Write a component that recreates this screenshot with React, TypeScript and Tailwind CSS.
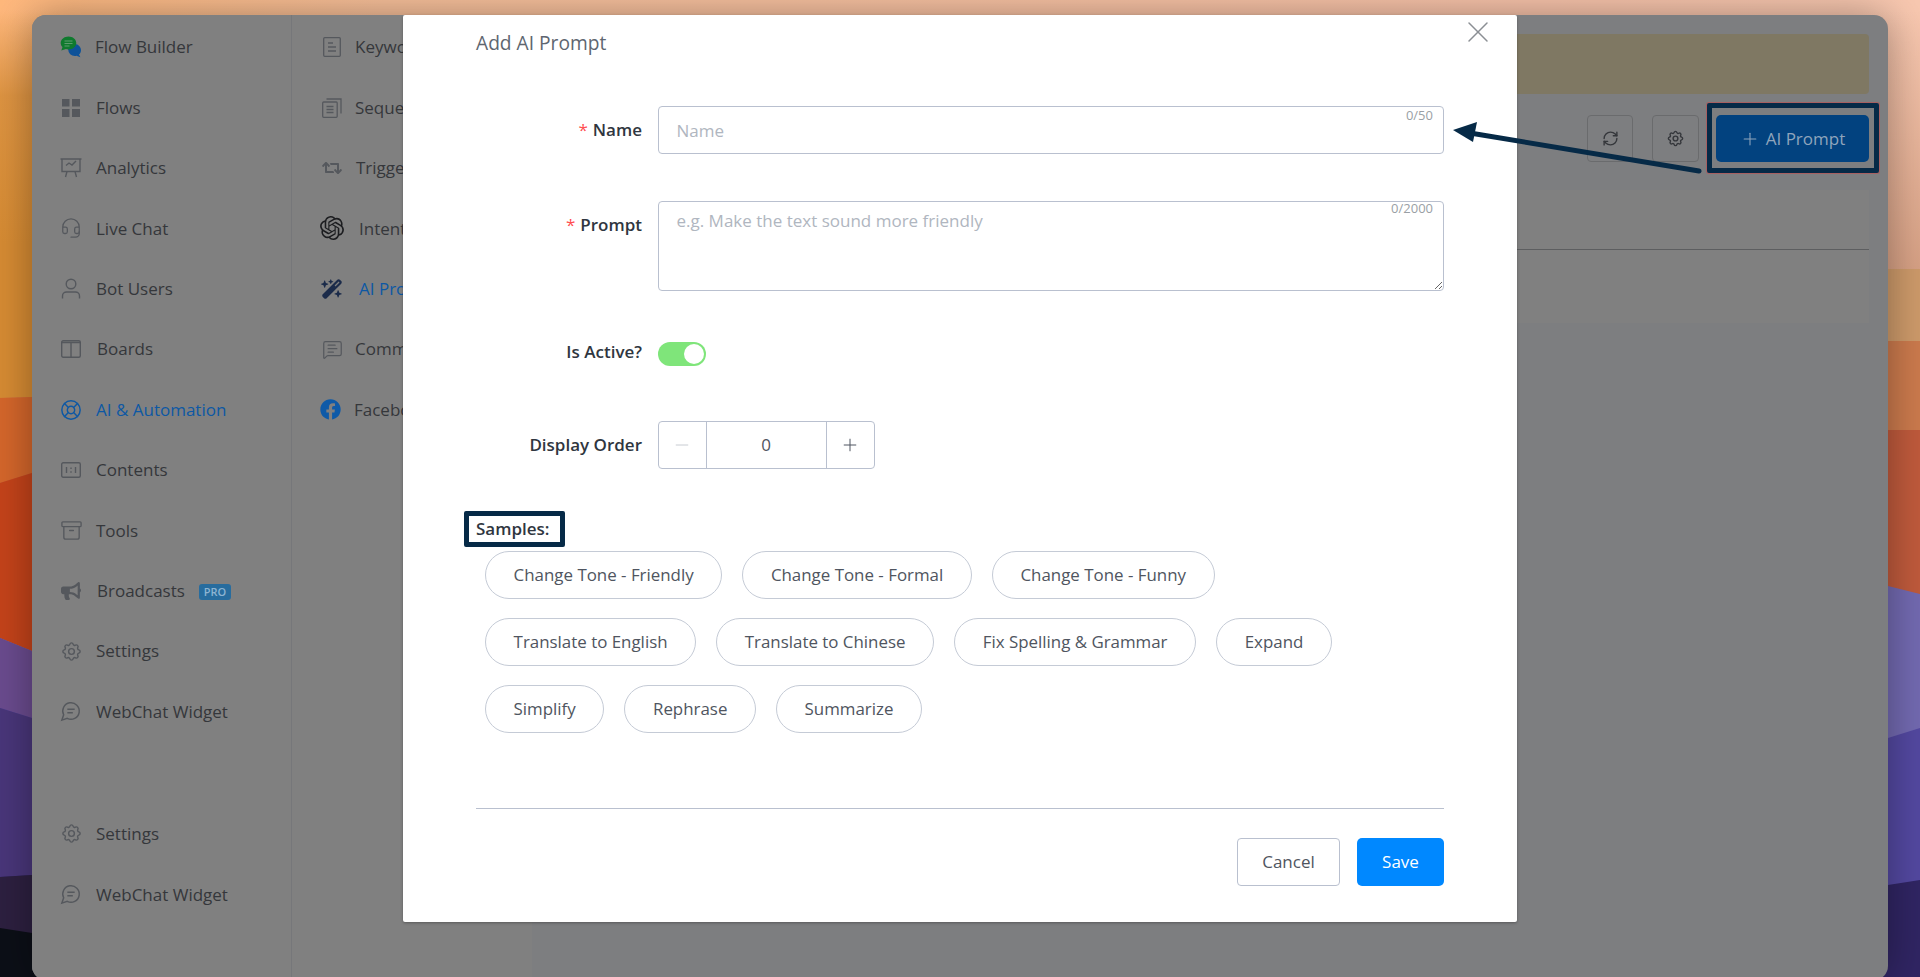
import type { ReactNode } from "react";
import {
  Archive,
  Headset,
  LifeBuoy,
  MessageSquareText,
  Minus,
  Plus,
  RefreshCw,
  X,
} from "lucide-react";
import { FaBullhorn, FaFacebook, FaRetweet } from "react-icons/fa";
import { FaWandMagicSparkles } from "react-icons/fa6";
import { SiOpenai } from "react-icons/si";
import { TbSettings } from "react-icons/tb";

const Wallpaper = () => (
  <svg
    className="absolute inset-0 h-full w-full"
    viewBox="0 0 1920 977"
    preserveAspectRatio="none"
  >
    <defs>
      <linearGradient id="topH" x1="0" y1="0" x2="1" y2="0">
        <stop offset="0" stopColor="#ffb87c" />
        <stop offset="0.2" stopColor="#f8c09a" />
        <stop offset="0.8" stopColor="#f8c3aa" />
        <stop offset="1" stopColor="#f8c8b0" />
      </linearGradient>
      <linearGradient id="leftV" x1="0" y1="0" x2="0" y2="1">
        <stop offset="0" stopColor="#d68b33" stopOpacity="0" />
        <stop offset="0.22" stopColor="#d68b33" stopOpacity="0.8" />
        <stop offset="0.6" stopColor="#d68b33" stopOpacity="1" />
        <stop offset="1" stopColor="#d68b33" stopOpacity="1" />
      </linearGradient>
      <linearGradient id="rightV" x1="0" y1="0" x2="0" y2="1">
        <stop offset="0" stopColor="#d6a084" stopOpacity="0" />
        <stop offset="1" stopColor="#d6a084" stopOpacity="1" />
      </linearGradient>
    </defs>
    <rect width="1920" height="977" fill="url(#topH)" />
    <rect x="0" y="10" width="60" height="390" fill="url(#leftV)" />
    <rect x="1860" y="10" width="60" height="262" fill="url(#rightV)" />
    <polygon points="1860,269 1920,269 1920,345 1860,345" fill="#cd9a6a" />
    <polygon points="0,398 32,397 1888,341 1920,341 1920,977 0,977" fill="#cb7a4d" />
    <polygon points="0,398 32,397 60,396 60,977 0,977" fill="#d4662b" />
    <polygon points="0,483 32,473 1888,430 1920,430 1920,977 0,977" fill="#bf5a3c" />
    <polygon points="0,483 32,473 60,471 60,977 0,977" fill="#c4431a" />
    <polygon points="0,638 32,651 1888,586 1920,594 1920,977 0,977" fill="#7269b0" />
    <polygon points="0,638 32,651 60,656 60,977 0,977" fill="#6a4b8e" />
    <polygon points="0,708 32,718 1888,738 1920,728 1920,977 0,977" fill="#5348a0" />
    <polygon points="0,708 32,718 60,722 60,977 0,977" fill="#49367a" />
    <polygon points="0,877 32,875 1888,885 1920,880 1920,977 0,977" fill="#302563" />
    <polygon points="0,877 32,875 60,875 60,977 0,977" fill="#2d2040" />
    <polygon points="0,928 32,933 60,935 60,977 0,977" fill="#0c0f17" />
  </svg>
);

const strokeIcon = "h-[22px] w-[22px] fill-none stroke-current";

const ChatBubbles = () => (
  <svg viewBox="0 0 22 22" className="h-[22px] w-[22px]">
    <path d="M9 8h6a6.5 6 0 0 1 6 6c0 2-.8 3.6-2 4.6l1.4 2.6-4-1.4c-.5.1-1 .2-1.6.2a6.5 6 0 0 1-6.5-6C7.3 11.5 8 9.500 9 8Z" fill="#0e5299" />
    <path d="M8.500 0.500c4.300 0 7.800 2.900 7.800 6.500s-3.500 6.500-7.800 6.500c-.9 0-1.800-.1-2.600-.4L1.300 14.400l1.200-3.300C1.300 9.900.7 8.500.7 7 .7 3.400 4.200.500 8.500.500Z" fill="#0f7a2e" />
    <path d="M4.500 5h8M4.500 7.500h8M4.500 10h5" stroke="#5c9c6e" strokeWidth="1" />
  </svg>
);

const GridIcon = () => (
  <svg viewBox="0 0 18 18" className="h-[18px] w-[18px] fill-current">
    <rect x="0" y="0" width="7.500" height="7.500" />
    <rect x="10" y="0" width="8" height="7.500" />
    <rect x="0" y="10" width="7.500" height="8" />
    <rect x="10" y="10" width="8" height="8" />
  </svg>
);

const ChartBoardIcon = () => (
  <svg viewBox="0 0 22 20" className={strokeIcon} strokeWidth="1.4">
    <path d="M0.500 1h21M2 1v12.500h18V1M6 7.500l3-2.500 3 2 4-4M7 13.500 5.500 19M15 13.500l1.500 5.500" />
  </svg>
);

const PersonIcon = () => (
  <svg viewBox="0 0 22 22" className={strokeIcon} strokeWidth="1.4">
    <circle cx="11" cy="6" r="4.800" />
    <path d="M2.500 20.500v-2.500c0-2.500 2-4 4-4h9c2 0 4 1.500 4 4v2.500" />
  </svg>
);

const BoardIcon = () => (
  <svg viewBox="0 0 20 18" className="h-[18px] w-[20px] fill-none stroke-current" strokeWidth="1.400">
    <rect x="0.700" y="0.700" width="18.600" height="16.600" rx="1.500" />
    <path d="M0.700 2.500h18.600M10 2.500v14.800" />
  </svg>
);

const ContentsIcon = () => (
  <svg viewBox="0 0 20 16" className="h-[16px] w-[20px] fill-none stroke-current" strokeWidth="1.400">
    <rect x="0.700" y="0.700" width="18.600" height="14.600" rx="1.500" />
    <path d="M5.500 5v6M14.500 5v6M10 5.500v1.500M10 9.200v1.500" />
  </svg>
);

const BubbleIcon = () => (
  <svg viewBox="0 0 24 24" className={strokeIcon} strokeWidth="1.600">
    <path d="M7.900 20A9 9 0 1 0 4 16.100L2 22Z" />
    <path d="M8 10h8M8 14h6" />
  </svg>
);

const DocIcon = () => (
  <svg viewBox="0 0 18 20" className="h-[20px] w-[18px] fill-none stroke-current" strokeWidth="1.300">
    <rect x="0.700" y="0.700" width="16.600" height="18.600" rx="1" />
    <path d="M5 6h5M5 10h8M5 14h8" />
  </svg>
);

const StackIcon = () => (
  <svg viewBox="0 0 20 20" className="h-[20px] w-[20px] fill-none stroke-current" strokeWidth="1.300">
    <rect x="0.700" y="4" width="14.500" height="15.300" rx="1" />
    <path d="M4.500 1h14.500v14.500M4.500 8.500h7M4.500 11.500h7M4.500 14.500h7" />
  </svg>
);

type Item = { label: string; icon?: ReactNode; active?: boolean; gap?: string; badge?: boolean };

const mainNav: Item[] = [
  { label: "Flow Builder", icon: <ChatBubbles />, gap: "-ml-[1px]" },
  { label: "Flows", icon: <GridIcon /> },
  { label: "Analytics", icon: <ChartBoardIcon /> },
  { label: "Live Chat", icon: <Headset size={22} strokeWidth={1.4} /> },
  { label: "Bot Users", icon: <PersonIcon /> },
  { label: "Boards", icon: <BoardIcon />, gap: "ml-[1px]" },
  { label: "AI & Automation", icon: <LifeBuoy size={22} strokeWidth={1.6} />, active: true },
  { label: "Contents", icon: <ContentsIcon /> },
  { label: "Tools", icon: <Archive size={23} strokeWidth={1.4} /> },
  { label: "Broadcasts", icon: <FaBullhorn size={20} />, badge: true, gap: "ml-[1px]" },
  { label: "Settings", icon: <TbSettings size={23} strokeWidth={1.5} /> },
  { label: "WebChat Widget", icon: <BubbleIcon /> },
];

const footerNav: Item[] = [
  { label: "Settings", icon: <TbSettings size={23} strokeWidth={1.5} /> },
  { label: "WebChat Widget", icon: <BubbleIcon /> },
];

const subNav: Item[] = [
  { label: "Keywords", icon: <DocIcon /> },
  { label: "Sequences", icon: <StackIcon /> },
  { label: "Triggers", icon: <FaRetweet size={20} />, gap: "ml-[1px]" },
  { label: "Intents", icon: <span className="text-[#1c1d20]"><SiOpenai size={24} /></span>, gap: "ml-[4px]" },
  {
    label: "AI Prompts",
    icon: <span className="text-[#1b2b4a]"><FaWandMagicSparkles size={22} /></span>,
    active: true,
    gap: "ml-[4px]",
  },
  { label: "Comments", icon: <MessageSquareText size={21} strokeWidth={1.4} /> },
  { label: "Facebook", icon: <span className="-ml-[4px] text-[#0e5aa8]"><FaFacebook size={21} /></span>, gap: "-ml-[1px]" },
];

const NavRow = ({ item, width }: { item: Item; width: string }) => (
  <div className="flex h-[60.4px] items-center">
    <span
      className={`flex ${width} shrink-0 items-center justify-center ${
        item.active ? "text-[#0d58a4]" : "text-[#55585d]"
      }`}
    >
      {item.icon}
    </span>
    <span
      className={`whitespace-nowrap text-[17px] ${item.gap ?? ""} ${
        item.active ? "text-[#0d58a4]" : "text-[#35373b]"
      }`}
    >
      {item.label}
    </span>
    {item.badge && (
      <span className="ml-[14px] mt-[3px] flex h-[16px] w-[32px] items-center justify-center rounded-[3px] bg-[#276c9e] text-[11px] font-semibold text-[#8db4d2]">
        PRO
      </span>
    )}
  </div>
);

const Label = ({ text, required }: { text: string; required?: boolean }) => (
  <div className="flex h-[48px] w-[166px] shrink-0 items-center justify-end font-semibold text-[#2f3640]">
    {required && <span className="mr-[5px] font-normal text-[#ff4d4f]">*</span>}
    {text}
  </div>
);

const sampleLabels = [
  "Change Tone - Friendly",
  "Change Tone - Formal",
  "Change Tone - Funny",
  "Translate to English",
  "Translate to Chinese",
  "Fix Spelling & Grammar",
  "Expand",
  "Simplify",
  "Rephrase",
  "Summarize",
];

const Modal = () => (
  <div className="absolute left-[403px] top-[15px] h-[907px] w-[1114px] rounded-[2px] bg-white px-[73px] text-[17px] shadow-[0_1px_3px_rgba(0,0,0,0.3)]">
    <button className="absolute left-[1057px] top-[-1.500px] text-[#8b8f94]">
      <X size={36} strokeWidth={1} />
    </button>
    <div className="flex h-[56px] items-center text-[19.200px] text-[#5e6670]">Add AI Prompt</div>

    <div className="mt-[35px] flex">
      <Label text="Name" required />
      <div className="relative ml-[15.500px] flex-1">
        <input
          placeholder="Name"
          className="h-[48px] w-full rounded-[4px] border border-[#b9c0cf] pl-[18px] placeholder:text-[#b0b6c0]"
        />
        <span className="absolute right-[11px] top-[0px] text-[13px] text-[#9a9fa5]">0/50</span>
      </div>
    </div>

    <div className="mt-[47px] flex">
      <Label text="Prompt" required />
      <div className="relative ml-[15.500px] flex h-[90px] flex-1">
        <textarea
          placeholder="e.g. Make the text sound more friendly"
          className="h-[90px] w-full resize-y rounded-[4px] border border-[#b9c0cf] px-[18px] pt-[6px] placeholder:text-[#b0b6c0]"
        />
        <span className="absolute right-[11px] top-[-2px] text-[13px] text-[#9a9fa5]">0/2000</span>
      </div>
    </div>

    <div className="mt-[51px] flex h-[24px] items-center">
      <div className="-mt-[4px]">
        <Label text="Is Active?" />
      </div>
      <div className="ml-[15.500px] flex h-[24px] w-[48px] items-center justify-end rounded-full bg-[#7fe57a] pr-[2px]">
        <span className="h-[20px] w-[20px] rounded-full bg-white" />
      </div>
    </div>

    <div className="mt-[55px] flex">
      <Label text="Display Order" />
      <div className="ml-[15.500px] flex h-[48px] w-[217px] items-center rounded-[4px] border border-[#b9c0cf] text-[#4f5560]">
        <span className="flex h-full w-[48px] items-center justify-center border-r border-[#b9c0cf] text-[#c8ccd2]">
          <Minus size={20} strokeWidth={1.2} />
        </span>
        <span className="flex-1 text-center">0</span>
        <span className="flex h-full w-[48px] items-center justify-center border-l border-[#b9c0cf]">
          <Plus size={20} strokeWidth={1.2} />
        </span>
      </div>
    </div>

    <div className="-ml-[12px] mt-[42px] flex h-[36px] w-[101px] items-center rounded-[2px] border-[5px] border-[#062a47] pl-[7px] font-semibold text-[#2f3640]">
      Samples:
    </div>

    <div className="ml-[9px] mt-[4px] flex flex-wrap gap-x-[20px] gap-y-[19px] text-[16.900px]">
      {sampleLabels.map((label) => (
        <button
          key={label}
          className="h-[48px] whitespace-nowrap rounded-full border border-[#c5cbd6] px-[27.600px] text-[#4f5560]"
        >
          {label}
        </button>
      ))}
    </div>

    <div className="mt-[75px] flex justify-end gap-[17px] border-t border-[#b9c0cf] pt-[29px]">
      <button className="h-[48px] w-[103px] rounded-[4px] border border-[#b9c0cf] text-[#4f5560]">Cancel</button>
      <button className="h-[48px] w-[87px] rounded-[5px] bg-[#0088ff] text-white">Save</button>
    </div>
  </div>
);

const App = () => (
  <div className="relative h-[977px] w-full overflow-hidden px-[32px] pt-[15px] font-['Open_Sans',sans-serif]">
    <Wallpaper />
    <div className="relative flex h-[965px] overflow-hidden rounded-[14px] bg-[#7d7e80] shadow-[0_0_40px_rgba(0,0,0,0.35)]">
      <aside className="w-[260px] shrink-0 border-r border-[#76777a] bg-[#808080] pl-[27px] pt-[2px]">
        {mainNav.map((item) => (
          <NavRow key={item.label} item={item} width="w-[24px] mr-[13px]" />
        ))}
        <div className="mt-[62px]">
          {footerNav.map((item) => (
            <NavRow key={item.label} item={item} width="w-[24px] mr-[13px]" />
          ))}
        </div>
      </aside>
      <nav className="w-[240px] shrink-0 bg-[#808080] pl-[28px] pt-[2px]">
        {subNav.map((item) => (
          <NavRow key={item.label} item={item} width="w-[24px] mr-[11px]" />
        ))}
      </nav>
      <main className="flex-1 pr-[19px] pt-[19px]">
        <div className="h-[60px] rounded-[4px] bg-[#7f7863]" />
        <div className="flex h-[96px] justify-end pt-[21px]">
          <button className="flex h-[47px] w-[46px] items-center justify-center rounded-[4px] border border-[#6a6b6d] text-[#35373b]">
            <RefreshCw size={17} strokeWidth={2} />
          </button>
          <button className="ml-[19px] flex h-[47px] w-[47px] items-center justify-center rounded-[4px] border border-[#6a6b6d] text-[#35373b]">
            <TbSettings size={19} strokeWidth={1.8} />
          </button>
          <button className="ml-[17px] flex h-[47px] w-[153px] items-center justify-center gap-[6px] rounded-[5px] bg-[#02427f] text-[17px] text-[#8fa5bc]">
            <Plus size={20} strokeWidth={1.3} />
            AI Prompt
          </button>
        </div>
        <div className="h-[133px] bg-[#808080]">
          <div className="h-[60px] border-b border-[#5d5e60]" />
        </div>
      </main>
    </div>

    <Modal />

    {/* annotation box and arrow over the screenshot */}
    <div className="absolute left-[1707px] top-[103px] h-[70px] w-[172px] rounded-[2px] border-[5px] border-[#062a47] shadow-[0_0_0_1px_rgba(220,60,60,0.45)]" />
    <svg className="absolute left-[1450px] top-[115px] h-[62px] w-[255px]" viewBox="0 0 255 62">
      <path d="M249 56 20 18" stroke="#062a47" strokeWidth="5" strokeLinecap="round" />
      <polygon points="3,15 27,7 23,27" fill="#062a47" />
    </svg>
  </div>
);

export default App;
